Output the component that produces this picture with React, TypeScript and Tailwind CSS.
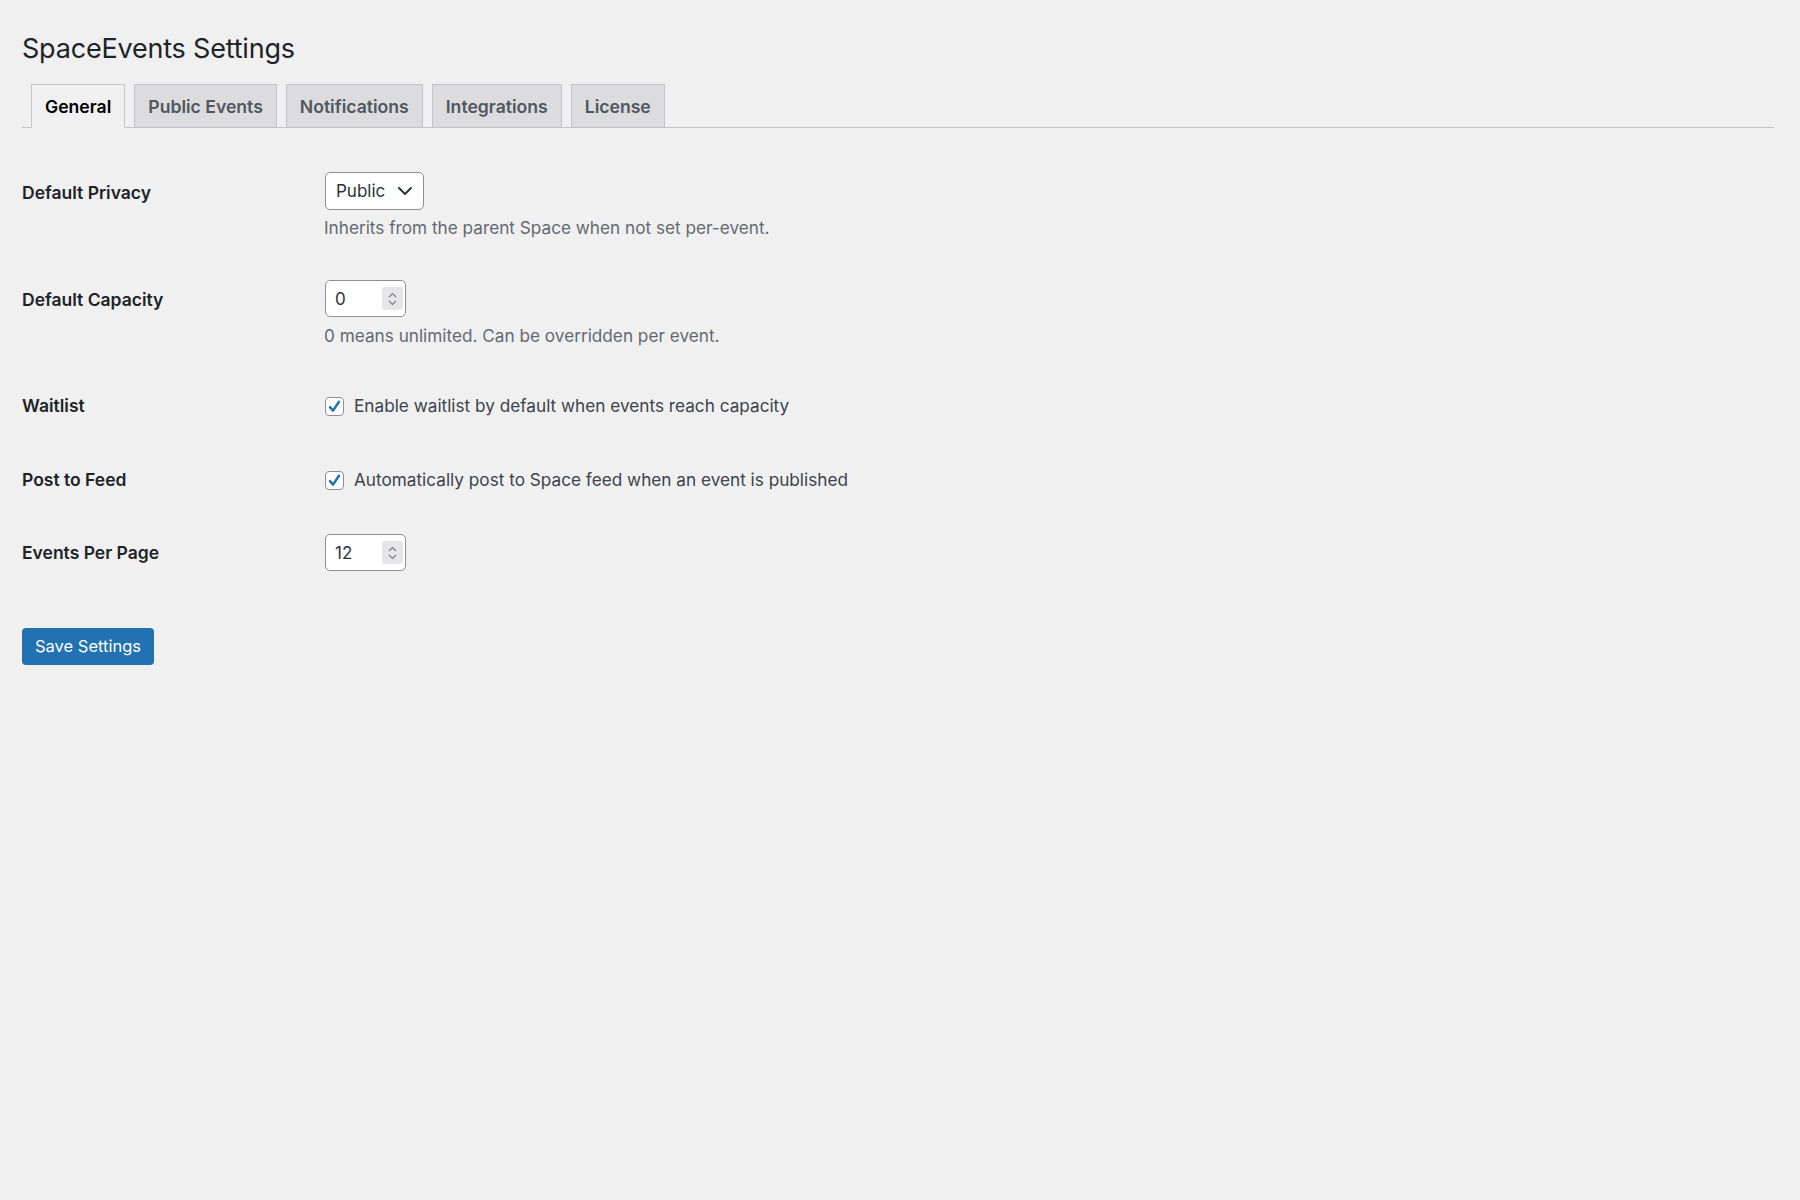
import { useState } from "react";

const tabs = ["General", "Public Events", "Notifications", "Integrations", "License"];

function Spinner() {
  return (
    <span className="flex h-[23px] w-[21px] flex-col items-center justify-center gap-[2px] rounded-[3px] bg-[#e6e6e8]">
      <svg width="9" height="6" viewBox="0 0 9 6" fill="none">
        <path d="M1 5 4.5 1.5 8 5" stroke="#7a7d82" strokeWidth="1.2" />
      </svg>
      <svg width="9" height="6" viewBox="0 0 9 6" fill="none">
        <path d="M1 1 4.5 4.5 8 1" stroke="#7a7d82" strokeWidth="1.2" />
      </svg>
    </span>
  );
}

function NumberField({ value }: { value: string }) {
  return (
    <div className="flex h-[37px] w-[81px] items-center justify-between rounded-[5px] border border-[#8c8f94] bg-white pl-[9px] pr-[2px]">
      <span className="pt-[2px] text-[17px] text-[#2c3338]">{value}</span>
      <Spinner />
    </div>
  );
}

function Checkbox({ checked }: { checked: boolean }) {
  return (
    <span className="flex h-[19px] w-[19px] shrink-0 items-center justify-center rounded-[4px] border border-[#8c8f94] bg-white">
      {checked ? (
        <svg width="15" height="15" viewBox="0 0 14 14" fill="none">
          <path d="M2.8 7.6 5.6 10.8 11.2 2.6" stroke="#2271b1" strokeWidth="2.3" strokeLinecap="round" strokeLinejoin="round" />
        </svg>
      ) : null}
    </span>
  );
}

export default function App() {
  const [activeTab] = useState("General");

  return (
    <div className="min-h-[1200px] w-full bg-[#f0f0f1] px-[22px] pr-[26px] font-['Inter','Liberation_Sans',sans-serif] text-[#1d2327]">
      <h1 className="pt-[31px] text-[27px] leading-[36px] font-normal tracking-[-0.2px] text-[#1d2327]">
        SpaceEvents Settings
      </h1>

      <nav className="mt-[17px] flex h-[44px] items-end gap-[9px] border-b border-[#c3c4c7] pl-[9px]">
        {tabs.map((tab) => {
          const isActive = tab === activeTab;
          return (
            <div
              key={tab}
              className={
                isActive
                  ? "-mb-px flex h-[44px] items-center border border-b-[#f0f0f1] border-[#c3c4c7] bg-[#f0f0f1] px-[13px] pt-[2px] text-[17.6px] font-semibold text-black"
                  : "flex h-[43px] items-center border border-b-0 border-[#c3c4c7] bg-[#dcdcde] px-[13px] pt-[2px] text-[17.6px] font-semibold text-[#50575e]"
              }
            >
              {tab}
            </div>
          );
        })}
      </nav>

      <div className="flex flex-col">
        <div className="mt-[44px] flex items-start">
          <div className="w-[303px] shrink-0 pt-[9px] text-[17.5px] leading-[24px] font-semibold">Default Privacy</div>
          <div className="flex flex-col">
            <div className="flex h-[38px] w-[99px] items-center justify-between rounded-[5px] border border-[#8c8f94] bg-white pl-[10px] pr-[10px] text-[17px] text-[#2c3338]">
              <span className="pt-[2px]">Public</span>
              <svg width="16" height="10" viewBox="0 0 16 10" fill="none">
                <path d="M2 2 8 8 14 2" stroke="#2c3338" strokeWidth="2" strokeLinecap="round" strokeLinejoin="round" />
              </svg>
            </div>
            <p className="mt-[6px] -ml-px text-[17.2px] leading-[24px] text-[#646970]">
              Inherits from the parent Space when not set per-event.
            </p>
          </div>
        </div>

        <div className="mt-[40px] flex items-start">
          <div className="w-[303px] shrink-0 pt-[8px] text-[17.5px] leading-[24px] font-semibold">Default Capacity</div>
          <div className="flex flex-col">
            <NumberField value="0" />
            <p className="mt-[7px] -ml-px text-[17.2px] leading-[24px] text-[#646970]">
              0 means unlimited. Can be overridden per event.
            </p>
          </div>
        </div>

        <div className="mt-[46px] flex items-start">
          <div className="w-[303px] shrink-0 text-[17.5px] leading-[24px] font-semibold">Waitlist</div>
          <label className="flex h-[24px] items-center gap-[10px] text-[17.2px] text-[#3c434a]">
            <Checkbox checked />
            Enable waitlist by default when events reach capacity
          </label>
        </div>

        <div className="mt-[50px] flex items-start">
          <div className="w-[303px] shrink-0 text-[17.5px] leading-[24px] font-semibold">Post to Feed</div>
          <label className="flex h-[24px] items-center gap-[10px] text-[17.2px] text-[#3c434a]">
            <Checkbox checked />
            Automatically post to Space feed when an event is published
          </label>
        </div>

        <div className="mt-[42px] flex items-start">
          <div className="w-[303px] shrink-0 pt-[7px] text-[17.5px] leading-[24px] font-semibold">Events Per Page</div>
          <NumberField value="12" />
        </div>

        <div className="mt-[57px]">
          <button
            type="button"
            className="h-[37px] w-[132px] rounded-[4px] bg-[#2271b1] text-[16.5px] text-white"
          >
            Save Settings
          </button>
        </div>
      </div>
    </div>
  );
}
